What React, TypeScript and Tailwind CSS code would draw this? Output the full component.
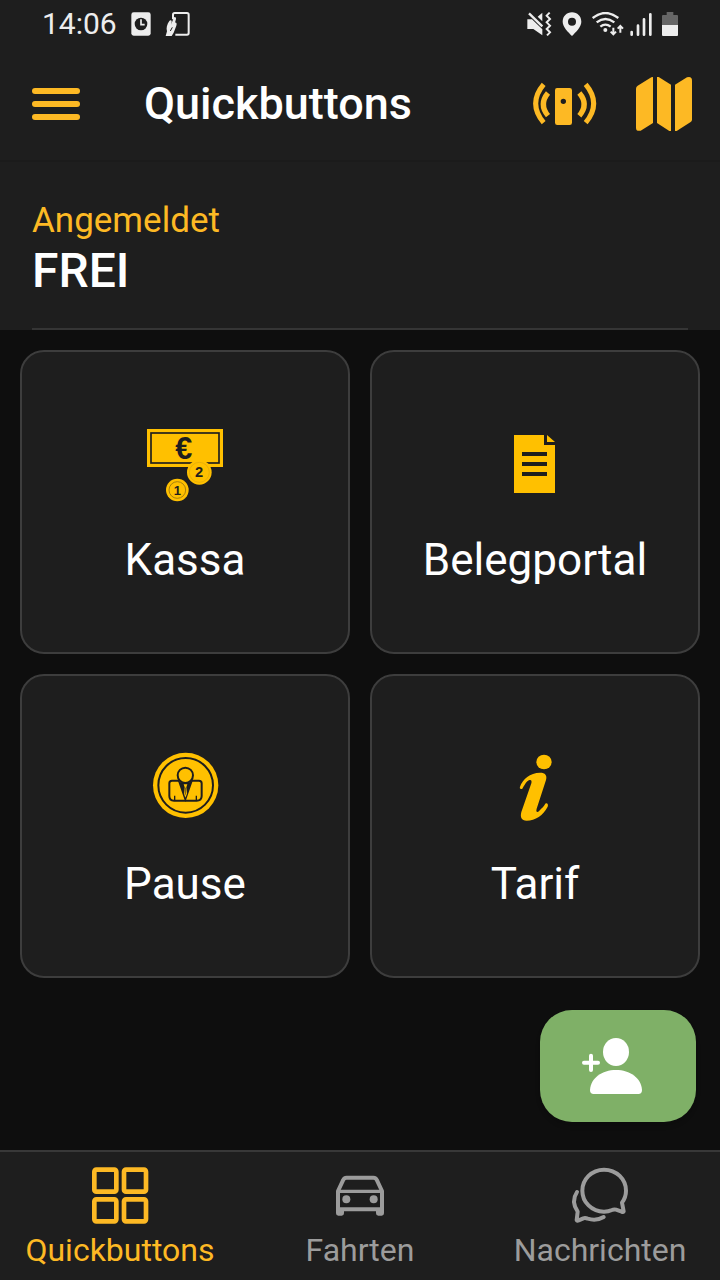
import type { ReactNode } from 'react';
import { clsx } from 'clsx';

interface QuickButton {
  id: string;
  label: string;
  icon: ReactNode;
}

interface Tab {
  id: string;
  label: string;
  icon: ReactNode;
  active?: boolean;
}

function StatusBar() {
  return (
    <div className="flex h-12 items-center justify-between px-[42px] text-[#ededed]">
      <div className="flex items-center gap-3.5">
        <span className="text-[30px] leading-9">14:06</span>
        <svg className="h-6 w-5" viewBox="333 36 60 72" aria-hidden="true">
          <rect x="334" y="37" width="58" height="70" rx="7" fill="currentColor" />
          <circle cx="363" cy="72" r="19" fill="#1e1e1e" />
          <path d="M363 58V74H374" fill="none" stroke="currentColor" strokeWidth="5" />
        </svg>
        <svg className="h-6 w-[25px]" viewBox="433 36 75 72" aria-hidden="true">
          <path
            d="M457 58V44Q457 39 462 39H499Q504 39 504 44V99Q504 104 499 104H464"
            fill="none"
            stroke="currentColor"
            strokeWidth="6"
          />
          <path
            d="M435 108L439 94C436 84 439 73 446 63C449 59 454 61 453 66L451 74L459 54C461 49 467 51 466 57L463 68C468 67 469 72 467 77L459 98L453 108Z"
            fill="currentColor"
          />
          <path d="M455 82L449 93" stroke="#1e1e1e" strokeWidth="3" />
        </svg>
      </div>

      <div className="flex items-center gap-2.5">
        <svg className="h-6 w-[25px]" viewBox="51 36 75 72" aria-hidden="true">
          <path d="M52 58H66L97 88V106L70 87H52Z" fill="currentColor" />
          <path d="M97 38V64L83 50Z" fill="currentColor" />
          <path d="M57 40L97 79" stroke="currentColor" strokeWidth="7" />
          <path
            d="M119 38L110 47L120 57L110 67L120 77L110 87L120 97L111 106"
            fill="none"
            stroke="currentColor"
            strokeWidth="6"
          />
        </svg>
        <svg className="h-6 w-5" viewBox="156 36 60 72" aria-hidden="true">
          <path
            fillRule="evenodd"
            d="M186 37C170 37 158 49 158 65C158 82 176 97 186 108C196 97 214 82 214 65C214 49 202 37 186 37ZM186 53A12 12 0 1 1 186 77A12 12 0 1 1 186 53Z"
            fill="currentColor"
          />
        </svg>
        <div className="flex gap-1.5">
          <svg className="h-6 w-8" viewBox="246 36 96 72" aria-hidden="true">
            <g fill="none" stroke="currentColor" strokeWidth="7">
              <path d="M248 54Q286 24 325 54" />
              <path d="M260 67Q286 47 313 67" />
              <path d="M271 80Q286 68 302 80" />
            </g>
            <circle cx="286" cy="90" r="6" fill="currentColor" />
            <g fill="none" stroke="currentColor" strokeWidth="6">
              <path d="M310 83V102M302 95L310 103L318 95" />
              <path d="M331 98V79M323 86L331 78L339 86" />
            </g>
          </svg>
          <svg className="h-6 w-[22px]" viewBox="360 36 66 72" aria-hidden="true">
            <g stroke="currentColor" strokeWidth="8" strokeLinecap="round">
              <path d="M365 96V104M384 77V104M402 58V104M421 43V104" />
            </g>
          </svg>
        </div>
        <svg className="h-6 w-4" viewBox="456 36 48 72" aria-hidden="true">
          <path d="M470 36H490V45H501Q504 45 504 48V75H456V48Q456 45 459 45H470Z" fill="#666" />
          <path d="M456 75H504V105Q504 108 501 108H459Q456 108 456 105Z" fill="currentColor" />
        </svg>
      </div>
    </div>
  );
}

function BeaconIcon() {
  return (
    <svg className="size-[72px]" viewBox="54 24 216 216" aria-hidden="true">
      <path
        fillRule="evenodd"
        d="M141 84H179Q186 84 186 91V188Q186 195 179 195H142Q135 195 135 188V91Q135 84 141 84ZM160 116A8 8 0 1 0 160 132A8 8 0 1 0 160 116Z"
        fill="currentColor"
      />
      <g fill="none" stroke="currentColor" strokeWidth="15">
        <path d="M101 73Q53 130 101 188" />
        <path d="M114 99Q86 133 114 167" strokeWidth="16" />
        <path d="M227 73Q275 130 227 188" />
        <path d="M208 99Q237 133 208 167" strokeWidth="16" />
      </g>
    </svg>
  );
}

function MapIcon() {
  return (
    <svg className="size-14" viewBox="378 48 168 168" aria-hidden="true">
      <g fill="currentColor">
        <path d="M429 51V189L392 212Q378 215 378 203V86Q378 80 383 77L424 52Z" />
        <path d="M441 51H446L483 74V213H478L441 189Z" />
        <path d="M495 74L531 52Q546 48 546 62V179Q546 183 542 186L500 213H495Z" />
      </g>
    </svg>
  );
}

function CashIcon() {
  return (
    <svg className="size-24" viewBox="21 18 288 288" aria-hidden="true">
      <rect x="51" y="57" width="228" height="114" fill="#ffc000" />
      <rect x="63" y="69" width="204" height="90" fill="none" stroke="#1e1e1e" strokeWidth="5" />
      <text
        x="161"
        y="147"
        textAnchor="middle"
        fontSize="92"
        fontWeight="700"
        fill="#1e1e1e"
        className="font-['Liberation_Sans',sans-serif]"
      >
        €
      </text>
      <circle cx="208" cy="187" r="37" fill="#ffc000" />
      <circle cx="208" cy="187" r="30" fill="none" stroke="#dca70a" strokeWidth="2" />
      <circle cx="142" cy="240" r="34" fill="#ffc000" />
      <circle cx="142" cy="240" r="25" fill="none" stroke="#a8800d" strokeWidth="3" />
      <g
        textAnchor="middle"
        fontWeight="700"
        fill="#1e1e1e"
        className="font-['Liberation_Sans',sans-serif]"
      >
        <text x="207" y="202" fontSize="44">
          2
        </text>
        <text x="142" y="254" fontSize="39">
          1
        </text>
      </g>
    </svg>
  );
}

function ReceiptIcon() {
  return (
    <svg className="size-24" viewBox="-9 18 288 288" aria-hidden="true">
      <path d="M72 75H162V105H195V249H72Z" fill="#ffc000" />
      <path d="M171 75L195 96H171Z" fill="#ffc000" />
      <path d="M96 132H171M96 162H171M96 192H171" stroke="#1e1e1e" strokeWidth="12" />
    </svg>
  );
}

function BreakIcon() {
  return (
    <svg className="size-24" viewBox="-9 0 288 288" aria-hidden="true">
      <circle cx="137" cy="136" r="98" fill="#ffc000" />
      <g fill="none" stroke="#1e1e1e" strokeWidth="6">
        <circle cx="137" cy="136" r="82" />
        <path d="M118 122H96Q88 122 88 130V168Q88 182 102 182H170Q185 182 185 168V130Q185 122 177 122H154" />
        <path d="M104 167V182M169 167V182" strokeWidth="4" />
      </g>
      <path d="M113 120L136 186L159 120L148 128H124Z" fill="#1e1e1e" />
      <path d="M131 133H142L139 142L141 161L136 173L132 161L134 142Z" fill="#ffc000" />
      <path d="M136 143V164" stroke="#1e1e1e" strokeWidth="2" />
      <circle cx="136" cy="106" r="23" fill="#ffc000" stroke="#1e1e1e" strokeWidth="6" />
    </svg>
  );
}

function InfoIcon() {
  return (
    <svg className="size-24" viewBox="-9 0 288 288" aria-hidden="true">
      <g fill="#ffc000">
        <ellipse cx="162" cy="66" rx="23" ry="22" />
        <path d="M90 140C98 118 120 98 150 98C166 98 172 106 168 120L140 206C137 216 142 219 148 212C156 204 162 198 166 191C171 187 176 193 173 200C160 226 136 242 110 242C94 241 90 232 94 216L124 130C127 119 120 117 112 124C106 130 102 138 97 146C92 148 88 146 90 140Z" />
      </g>
    </svg>
  );
}

function AddPersonIcon() {
  return (
    <svg className="h-16 w-[76px]" viewBox="180 132 228 192" aria-hidden="true">
      <ellipse cx="288" cy="186" rx="39" ry="42" fill="currentColor" />
      <path
        d="M210 300C212 264 246 240 288 240C330 240 364 264 366 300Q366 312 355 312H221Q210 312 210 300Z"
        fill="currentColor"
      />
      <path
        d="M192 218H234M213 197V240"
        stroke="currentColor"
        strokeWidth="12"
        strokeLinecap="round"
      />
    </svg>
  );
}

function GridIcon() {
  return (
    <svg className="size-16" viewBox="264 72 192 192" aria-hidden="true">
      <g fill="none" stroke="currentColor" strokeWidth="14">
        <rect x="283" y="89" width="66" height="66" rx="6" />
        <rect x="372" y="89" width="66" height="66" rx="6" />
        <rect x="283" y="178" width="66" height="66" rx="6" />
        <rect x="372" y="178" width="66" height="66" rx="6" />
      </g>
    </svg>
  );
}

function CarIcon() {
  return (
    <svg className="size-16" viewBox="114 72 192 192" aria-hidden="true">
      <g fill="none" stroke="currentColor" strokeWidth="12" strokeLinejoin="round">
        <path d="M144 208V153L159 121Q162 113 170 113H250Q258 113 261 121L276 153V208Z" />
        <path d="M144 154H276" strokeWidth="10" />
      </g>
      <circle cx="169" cy="178" r="12" fill="currentColor" />
      <circle cx="251" cy="178" r="12" fill="currentColor" />
      <path
        d="M138 205H162V220Q162 227 155 227H145Q138 227 138 220ZM258 205H282V220Q282 227 275 227H265Q258 227 258 220Z"
        fill="currentColor"
      />
    </svg>
  );
}

function ChatIcon() {
  return (
    <svg className="size-16" viewBox="204 72 192 192" aria-hidden="true">
      <g
        fill="none"
        stroke="currentColor"
        strokeWidth="12"
        strokeLinecap="round"
        strokeLinejoin="round"
      >
        <path d="M312 89C350 89 378 118 378 152C378 166 374 177 366 188L371 214Q369 217 365 215L348 209Q342 207 336 210C327 214 320 215 312 215C275 215 247 186 247 152C247 118 275 89 312 89Z" />
        <path d="M231 156C219 174 220 196 233 215L230 240Q231 244 236 241L250 235Q256 233 263 236C279 241 296 240 311 231" />
      </g>
    </svg>
  );
}

const QUICK_BUTTONS: QuickButton[] = [
  { id: 'kassa', label: 'Kassa', icon: <CashIcon /> },
  { id: 'belegportal', label: 'Belegportal', icon: <ReceiptIcon /> },
  { id: 'pause', label: 'Pause', icon: <BreakIcon /> },
  { id: 'tarif', label: 'Tarif', icon: <InfoIcon /> },
];

const TABS: Tab[] = [
  { id: 'quickbuttons', label: 'Quickbuttons', icon: <GridIcon />, active: true },
  { id: 'fahrten', label: 'Fahrten', icon: <CarIcon /> },
  { id: 'nachrichten', label: 'Nachrichten', icon: <ChatIcon /> },
];

export default function App() {
  return (
    <div className="flex min-h-screen flex-col bg-[#0e0e0e] font-[Roboto,sans-serif] text-white">
      <header className="bg-[#1e1e1e]">
        <StatusBar />
        <div className="flex h-28 items-center pr-7 pl-8 text-[#fdb924]">
          <button type="button" aria-label="Menü" className="flex w-12 flex-col gap-[7px]">
            <span className="h-1.5 w-full rounded-full bg-current" />
            <span className="h-1.5 w-full rounded-full bg-current" />
            <span className="h-1.5 w-full rounded-full bg-current" />
          </button>
          <h1 className="ml-16 flex-1 text-[45px] leading-14 font-medium text-white">
            Quickbuttons
          </h1>
          <div className="flex items-center gap-9">
            <button type="button" aria-label="Funk">
              <BeaconIcon />
            </button>
            <button type="button" aria-label="Karte">
              <MapIcon />
            </button>
          </div>
        </div>
      </header>

      {/* Driver status */}
      <section className="border-t-2 border-[#1b1b1b] bg-[#1e1e1e] px-8">
        <div className="border-b-2 border-[#353535] pt-[39px] pb-[29px]">
          <p className="text-[35px] leading-10 text-[#fdb924]">Angemeldet</p>
          <p className="mt-0.5 text-5xl leading-14 font-medium">FREI</p>
        </div>
      </section>

      <main className="relative flex-1 p-5">
        <div className="grid grid-cols-2 gap-5">
          {QUICK_BUTTONS.map((button) => (
            <button
              key={button.id}
              type="button"
              className="flex h-[304px] flex-col items-center justify-center gap-5 rounded-3xl border-2 border-[#3d3d3d] bg-[#1e1e1e]"
            >
              {button.icon}
              <span className="text-[44px] leading-14">{button.label}</span>
            </button>
          ))}
        </div>

        <button
          type="button"
          aria-label="Fahrgast hinzufügen"
          className="absolute right-6 bottom-7 flex h-28 w-[156px] items-center justify-center rounded-4xl bg-[#7fb067] text-white shadow-md"
        >
          <AddPersonIcon />
        </button>
      </main>

      <nav className="grid grid-cols-3 border-t-2 border-[#383838] bg-[#1e1e1e]">
        {TABS.map((tab) => (
          <a
            key={tab.id}
            href={`#${tab.id}`}
            aria-current={tab.active ? 'page' : undefined}
            className={clsx(
              'flex flex-col items-center gap-0.5 pt-3 pb-2.5',
              tab.active ? 'text-[#fdb924]' : 'text-[#9c9c9c]'
            )}
          >
            {tab.icon}
            <span className="text-[32px] leading-10">{tab.label}</span>
          </a>
        ))}
      </nav>
    </div>
  );
}
